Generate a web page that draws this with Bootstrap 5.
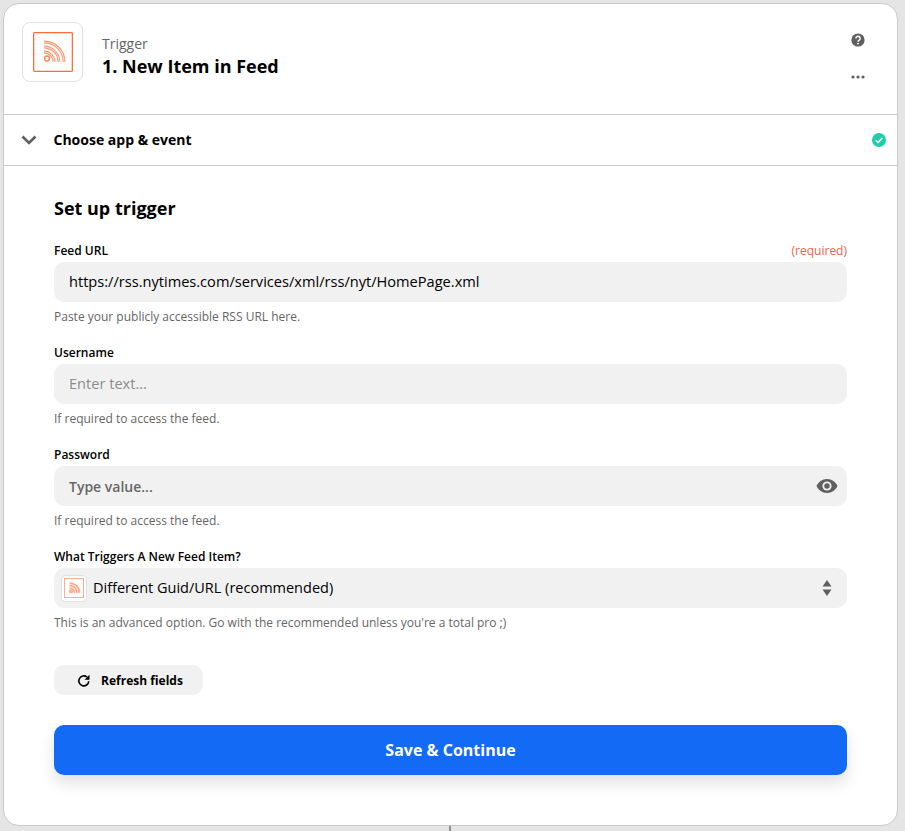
<!DOCTYPE html>
<html lang="en">
<head>
<meta charset="utf-8">
<title>Trigger</title>
<link href="https://cdn.jsdelivr.net/npm/bootstrap@5.3.0/dist/css/bootstrap.min.css" rel="stylesheet">
<style>
html,body{height:831px;overflow:hidden}
body{background:#e5e5e5;font-family:"Open Sans",sans-serif;color:#000;padding:3px 7px 0 3px}
.zap-card{background:#fff;border:1px solid #c9c9c9;border-radius:16px;height:823px}
.zap-head{height:111px;padding:18px 31px 0 18px;border-bottom:1px solid #c9c9c9}
.app-tile{width:61px;height:60px;border:1px solid #e2e2e2;border-radius:8px;background:#fff}
.head-text{margin-left:19px;padding-top:12px}
.trig-kicker{font-size:14px;line-height:20px;color:#666}
.trig-title{font-size:18px;line-height:26px;font-weight:700;color:#000;margin-top:-1px}
.head-tools{width:16px;padding-top:11px;gap:28px}
.zap-row{height:51px;padding:0 11px 0 17px;border-bottom:1px solid #c9c9c9}
.row-name{font-size:14px;font-weight:700;margin-left:16.500px;margin-bottom:2px}
.zap-form{padding:29px 50px 0 50px}
.form-head{font-size:18px;line-height:26px;font-weight:700;margin:0 0 21px}
.field-block{margin-bottom:19px}
.field-label{font-size:12px;line-height:18px;font-weight:600;margin-bottom:2px}
.req-note{font-size:12px;line-height:18px;color:#f0624d;font-weight:400}
.field-box{height:40px;background:#f1f1f1;border-radius:10px;padding:0 15px;font-size:14.600px;line-height:20px}
input.field-box{border:0;width:100%;outline:0;font-family:inherit;color:#000;display:block;padding-bottom:2px}
input.field-box::placeholder{color:#8c8c8c;font-weight:400;opacity:1}
input.pwd-box{font-size:14px;padding-bottom:0}
input.pwd-box::placeholder{color:#666;font-weight:600}
.pwd-wrap{position:relative}
.eye-ico{position:absolute;right:9px;top:12px}
.field-help{font-size:12px;line-height:16px;color:#666;margin-top:7px}
.pick-box{padding:0 15px 0 7px;font-weight:400;font-size:14.500px}
.mini-tile{width:26px;height:27px;border:1px solid #e2e2e2;border-radius:4px;background:#fff;margin-right:6px}
.refresh-btn{height:30px;width:149px;background:#f1f1f1;border:0;border-radius:10px;font-size:12px;font-weight:700;color:#000;font-family:inherit;margin-top:34px;padding:2px 0 0 3px}
.refresh-btn svg{margin-right:10px}
.save-btn{height:50px;background:#136bf5;border:0;border-radius:10px;color:#fff;font-size:16px;font-weight:700;font-family:inherit;margin-top:30px;box-shadow:0 8px 16px rgba(0,0,0,.12)}
.tie-line{width:2px;height:5px;background:#8f8f8f;margin-left:446px}
</style>
</head>
<body>
<div class="zap-card">
  <div class="zap-head d-flex align-items-start">
    <div class="app-tile d-flex align-items-center justify-content-center">
      <svg width="40" height="40" viewBox="0 0 40 40" fill="none">
        <rect x=".65" y=".65" width="38.700" height="38.700" rx="1" stroke="#ff6d3a" stroke-width="1.300"/>
        <g stroke="#ff8a60" stroke-width="2.800">
          <circle cx="14" cy="26.500" r="2.400" stroke-width="1.500"/>
          <path d="M11 20a10 10 0 0 1 10 10"/>
          <path d="M11 15a15 15 0 0 1 15 15"/>
          <path d="M11 10a20 20 0 0 1 20 20"/>
        </g>
        <g stroke="#ffe3d8" stroke-width="1.100">
          <path d="M11 20a10 10 0 0 1 10 10"/>
          <path d="M11 15a15 15 0 0 1 15 15"/>
          <path d="M11 10a20 20 0 0 1 20 20"/>
        </g>
      </svg>
    </div>
    <div class="head-text flex-grow-1">
      <div class="trig-kicker">Trigger</div>
      <div class="trig-title">1. New Item in Feed</div>
    </div>
    <div class="head-tools d-flex flex-column align-items-center">
      <svg width="14" height="14" viewBox="0 0 14 14">
        <circle cx="7" cy="7" r="6.600" fill="#5f5f5f"/>
        <path d="M4.900 5.400a2.100 2.100 0 1 1 3.300 1.700c-.8.500-1.200.9-1.200 1.600" fill="none" stroke="#fff" stroke-width="1.500"/>
        <circle cx="7" cy="10.600" r=".95" fill="#fff"/>
      </svg>
      <svg width="14" height="4" viewBox="0 0 14 4" fill="#5f5f5f">
        <circle cx="2" cy="2" r="1.600"/><circle cx="7" cy="2" r="1.600"/><circle cx="12" cy="2" r="1.600"/>
      </svg>
    </div>
  </div>
  <div class="zap-row d-flex align-items-center">
    <svg width="16" height="10" viewBox="0 0 16 10" fill="none"><path d="M1.500 1.500 8 8l6.500-6.500" stroke="#5f5f5f" stroke-width="2.600"/></svg>
    <div class="row-name flex-grow-1">Choose app &amp; event</div>
    <svg width="14" height="14" viewBox="0 0 14 14"><circle cx="7" cy="7" r="7" fill="#1fcfa5"/><path d="M3.700 7.200 6 9.400l4.400-4.500" fill="none" stroke="#fff" stroke-width="1.500"/></svg>
  </div>
  <div class="zap-form d-flex flex-column">
    <h2 class="form-head">Set up trigger</h2>
    <div class="field-block">
      <div class="field-label d-flex justify-content-between"><span>Feed URL</span><span class="req-note">(required)</span></div>
      <input class="field-box" type="text" value="https://rss.nytimes.com/services/xml/rss/nyt/HomePage.xml" aria-label="Feed URL">
      <div class="field-help">Paste your publicly accessible RSS URL here.</div>
    </div>
    <div class="field-block">
      <div class="field-label">Username</div>
      <input class="field-box" type="text" placeholder="Enter text..." aria-label="Username">
      <div class="field-help">If required to access the feed.</div>
    </div>
    <div class="field-block">
      <div class="field-label">Password</div>
      <div class="pwd-wrap">
        <input class="field-box pwd-box" type="text" placeholder="Type value..." aria-label="Password">
        <svg class="eye-ico" width="22" height="16" viewBox="0 0 22 16">
          <path d="M11 1C6 1 2.500 4 .5 8c2 4 5.500 7 10.500 7s8.500-3 10.500-7C19.500 4 16 1 11 1z" fill="#5f5f5f"/>
          <circle cx="11" cy="8" r="4.600" fill="#f1f1f1"/>
          <circle cx="11" cy="8" r="2.700" fill="#5f5f5f"/>
        </svg>
      </div>
      <div class="field-help">If required to access the feed.</div>
    </div>
    <div>
      <div class="field-label">What Triggers A New Feed Item?</div>
      <div class="field-box pick-box d-flex align-items-center">
        <div class="mini-tile d-flex align-items-center justify-content-center">
          <svg width="20" height="20" viewBox="0 0 40 40" fill="none" stroke="#ffab8c">
            <rect x="1" y="1" width="38" height="38" stroke-width="2"/>
            <g stroke-width="3.500">
              <circle cx="14" cy="26.500" r="2.500"/>
              <path d="M11 20a10 10 0 0 1 10 10"/>
              <path d="M11 15a15 15 0 0 1 15 15"/>
              <path d="M11 10a20 20 0 0 1 20 20"/>
            </g>
          </svg>
        </div>
        <span class="flex-grow-1">Different Guid/URL (recommended)</span>
        <svg width="10" height="16" viewBox="0 0 10 16" fill="#5f5f5f"><path d="M5 0 9.500 6.500h-9zM5 16 .5 9.500h9z"/></svg>
      </div>
      <div class="field-help">This is an advanced option. Go with the recommended unless you're a total pro ;)</div>
    </div>
    <button type="button" class="refresh-btn d-flex align-items-center justify-content-center align-self-start">
      <svg width="14" height="14" viewBox="0 0 14 14" fill="none"><path d="M11.800 7.300A5 5 0 1 1 10 3" stroke="#000" stroke-width="1.600"/><path d="M12.500.7v5h-5z" fill="#000"/></svg>
      Refresh fields
    </button>
    <button type="button" class="save-btn w-100">Save &amp; Continue</button>
  </div>
</div>
<div class="tie-line"></div>
</body>
</html>
